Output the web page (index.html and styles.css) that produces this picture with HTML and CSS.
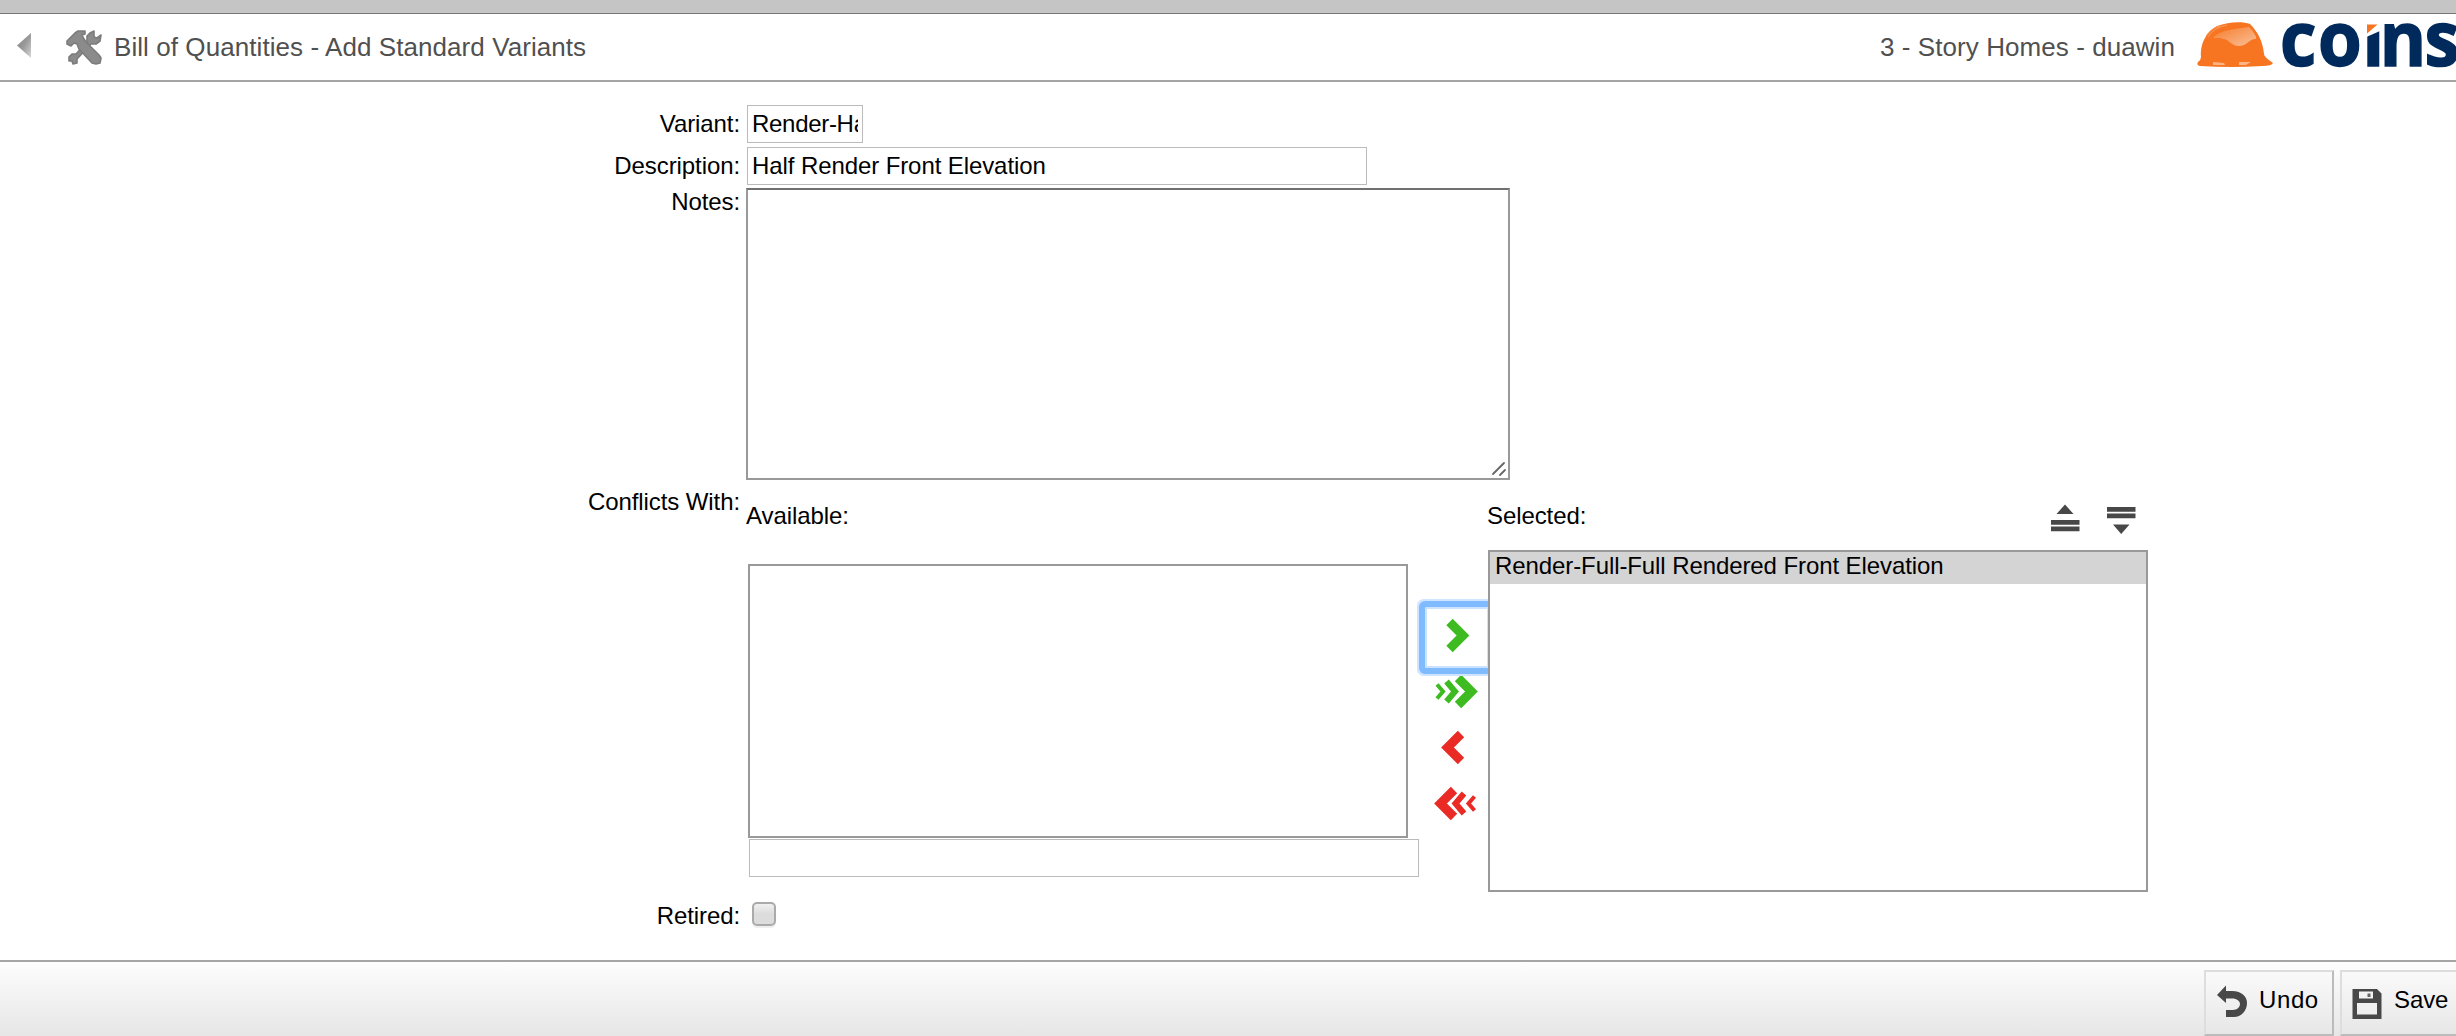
FILE: index.html
```html
<!DOCTYPE html>
<html lang="en">
<head>
<meta charset="utf-8">
<title>Bill of Quantities - Add Standard Variants</title>
<link rel="stylesheet" href="styles.css">
</head>
<body>
<div class="strip"></div>
<header class="header">
  <svg class="back" width="14" height="25" viewBox="0 0 14 25"><defs><linearGradient id="bg" x1="0" y1="0" x2="1" y2="1"><stop offset="0" stop-color="#858585"/><stop offset=".5" stop-color="#999"/><stop offset="1" stop-color="#d8d8d8"/></linearGradient></defs><path d="M14 0V25L0 12.5Z" fill="url(#bg)"/></svg>
  <svg class="tools" width="36" height="35" viewBox="0 0 36 35"><g fill="#8b8b8b" stroke="#7c7c7c" stroke-width="1.6" stroke-linejoin="round"><path d="M24 3L28 1V7L31 8L35 5L34 11L30 14L25 14L11 29V33L7 34L6 31L3 31V27L6 24L10 24L21 12V6Z"/><path d="M1 11L9 3L12 1H19V4L16 5L18 9L20 12L33 25L35 28L34 33L30 34L26 33L13 19L11 14L8 13L5 16L1 14Z"/></g></svg>
  <h1 class="title">Bill of Quantities - Add Standard Variants</h1>
  <span class="user">3 - Story Homes - duawin</span>
  <svg class="logo" width="260" height="66" viewBox="2196 14 260 66">
    <defs>
      <linearGradient id="hat" x1="0" y1="0" x2="1" y2="1"><stop offset="0" stop-color="#f57c2b"/><stop offset="1" stop-color="#fbc099"/></linearGradient>
      <clipPath id="cut"><rect x="2270" y="22" width="186" height="50"/></clipPath>
    </defs>
    <path d="M2201 57C2200 40 2209 31 2217 26C2228 22 2242 21 2250 24C2258 32 2263 42 2264 54Q2264 57 2273 63Q2272 66 2262 66Q2232 68 2200 66Q2196 65 2198 62Q2201 60 2201 57Z" fill="#f77420"/>
    <path d="M2213 38C2219 30 2235 29 2249 27C2255 33 2257 38 2256 39C2250 38 2246 47 2238 46C2230 45 2229 39 2223 39C2219 37 2216 39 2213 38Z" fill="url(#hat)"/>
    <path d="M2208 37Q2213 28 2227 25M2206 36Q2211 28 2220 26" fill="none" stroke="#f99c5f" stroke-width="1"/>
    <path d="M2213 62L2224 63L2225 65H2213ZM2239 62H2251L2246 65H2239Z" fill="#fcb385"/>
    <g clip-path="url(#cut)"><text class="wordmark" y="65.5" transform="translate(2278 0) scale(.93 1)" x="2.200 43 91 109.500 157.500">coins</text></g>
    <path d="M2364 20H2380V31L2364 38Z" fill="#fff"/>
    <path d="M2367 24.500H2377.500L2367 33.500Z" fill="#f77420"/>
  </svg>
</header>
<main class="form">
  <div class="row row-variant"><label class="label">Variant:</label><div class="text short">Render-Half</div></div>
  <div class="row row-desc"><label class="label">Description:</label><div class="text long">Half Render Front Elevation</div></div>
  <div class="row row-notes"><label class="label">Notes:</label>
    <div class="notes"><svg width="16" height="16" viewBox="0 0 16 16"><path d="M2 13L13 2M9 14L14 9" stroke="#666" stroke-width="1.8" stroke-linecap="round"/></svg></div>
  </div>
  <div class="row row-conflicts"><label class="label">Conflicts With:</label>
    <div class="available"><span class="caption">Available:</span><div class="list list-available"></div><div class="text filter"></div></div>
    <div class="moves">
      <div class="move focused"><svg width="46" height="48" viewBox="0 0 46 48"><path d="M16.500 10L30 23.500L16.500 37" class="g w7"/></svg></div>
      <div class="move"><svg width="46" height="48" viewBox="0 0 46 48"><path d="M25 10L38.500 23.500L25 37" class="g w7"/><path d="M13.500 13.500L22 23.500L13.500 33.500" class="g w5"/><path d="M4 16.500L10 23.500L4 30.500" class="g w3"/></svg></div>
      <div class="move"><svg width="46" height="48" viewBox="0 0 46 48"><path d="M28 10L14.500 23.500L28 37" class="r w7"/></svg></div>
      <div class="move"><svg width="46" height="48" viewBox="0 0 46 48"><path d="M21 10L7.500 23.500L21 37" class="r w7"/><path d="M31 13.500L22.500 23.500L31 33.500" class="r w5"/><path d="M41.500 16.500L35.500 23.500L41.500 30.500" class="r w3"/></svg></div>
    </div>
    <div class="selected">
      <div class="selected-head"><span>Selected:</span>
        <svg width="90" height="34" viewBox="2048 502 90 34" fill="#484848"><path d="M2056.500 514L2065 504.500L2073.500 514ZM2051 520H2079.500V524.700H2051ZM2051 526.500H2079.500V531.200H2051ZM2107 507H2135.500V511.700H2107ZM2107 513.500H2135.500V518.200H2107ZM2113 524.500H2129.500L2121.200 534Z"/></svg>
      </div>
      <div class="list list-selected"><div class="option">Render-Full-Full Rendered Front Elevation</div></div>
    </div>
  </div>
  <div class="row row-retired"><label class="label">Retired:</label><span class="check"></span></div>
</main>
<footer class="footer">
  <div class="button undo"><svg width="32" height="36" viewBox="2216 984 32 36"><path d="M2217 995L2226 985.500V991H2232C2242 991 2247 997 2247 1003C2247 1011 2241 1017 2234 1017H2226V1010H2233C2237 1010 2240 1007 2240 1004C2240 1001 2237 998.500 2232 998.500H2226V1003Z" fill="#484848"/></svg><span>Undo</span></div>
  <div class="button save"><svg width="30" height="32" viewBox="2352 988 30 32"><path fill-rule="evenodd" d="M2352.500 989H2377L2381.500 993.500V1019H2352.500ZM2359 991.500V998.500H2373V991.500ZM2357 1003V1014.500H2377V1003Z" fill="#484848"/><rect x="2367.500" y="993.500" width="3" height="3.500" fill="#666"/></svg><span>Save</span></div>
</footer>
</body>
</html>
```
FILE: styles.css
```css
* { box-sizing: border-box; }
body {
  margin: 0;
  width: 2456px;
  height: 1036px;
  overflow: hidden;
  display: flex;
  flex-direction: column;
  background: #fff;
  color: #000;
  font: 24px/28px "Liberation Sans", Arial, sans-serif;
  letter-spacing: -.09px;
}
svg { display: block; flex: none; }
.strip { height: 14px; flex: none; background: #c5c5c5; border-bottom: 1px solid #777; }
.header {
  height: 68px;
  flex: none;
  display: flex;
  align-items: center;
  padding-left: 17px;
  border-bottom: 2px solid #a5a5a5;
  color: #505050;
  font-size: 26px;
  line-height: 30px;
  letter-spacing: .07px;
}
.back { margin-top: -3px; }
.tools { margin-left: 35px; }
.title { margin: 0 auto 0 12px; font-size: 26px; font-weight: 400; line-height: 30px; }
.user { margin-right: 21px; }
.wordmark { font: 700 76px "Open Sans", sans-serif; letter-spacing: 0; fill: #002a5c; stroke: #002a5c; stroke-width: 1.6px; }

.form { height: 878px; flex: none; padding-top: 23px; }
.row { display: flex; align-items: flex-start; }
.label { width: 742px; flex: none; padding-right: 2px; text-align: right; }
.row-variant, .row-desc { height: 42px; }
.row-variant .label, .row-desc .label { padding-top: 5px; }
.text { height: 38px; margin-left: 5px; padding: 4px; border: 1px solid #bbb; white-space: nowrap; background: #fff; }
.short { width: 116px; overflow: clip; overflow-clip-margin: content-box; letter-spacing: -.3px; }
.long { width: 620px; }
.row-notes { height: 300px; margin-top: -1px; }
.notes {
  width: 764px;
  height: 292px;
  margin-left: 4px;
  border: 2px solid #999;
  border-top-color: #707070;
  display: flex;
  align-items: flex-end;
  justify-content: flex-end;
  padding: 1px;
}
.row-conflicts { height: 414px; }
.available { width: 673px; margin-left: 4px; padding-top: 14px; }
.caption { display: block; height: 62px; }
.list { width: 660px; border: 2px solid #999; background: #fff; }
.list-available { height: 274px; margin: 0 0 1px 2px; }
.filter { width: 670px; margin-left: 3px; }
.moves { width: 68px; padding-top: 120px; }
.move { width: 68px; height: 56px; padding: 4px 0 0 14px; }
.focused { position: relative; }
.focused::before {
  content: "";
  position: absolute;
  left: 6px;
  top: -1px;
  width: 60px;
  height: 57px;
  border: 2px solid #cce3ff;
  box-shadow: 0 0 0 6px #80bbff, 0 0 0 8px #cfe5ff;
  border-radius: 2px;
}
.g, .r { fill: none; }
.g { stroke: #3dbb20; }
.r { stroke: #e92a25; }
.w7 { stroke-width: 9; }
.w5 { stroke-width: 6; }
.w3 { stroke-width: 4; }
.selected { position: relative; width: 661px; padding-top: 14px; }
.selected-head { display: flex; justify-content: space-between; height: 48px; padding-right: 10px; }
.list-selected { height: 342px; margin-left: 1px; }
.option { height: 32px; padding: 0 5px; background: #d4d4d4; white-space: nowrap; }
.check {
  width: 24px;
  height: 24px;
  margin-left: 10px;
  border: 2px solid #aaa;
  border-radius: 5px;
  background: linear-gradient(#f0f0f0, #dcdcdc 50%);
  box-shadow: 0 2px 1px #eee;
}
.footer {
  height: 76px;
  flex: none;
  display: flex;
  justify-content: flex-end;
  gap: 6px;
  padding-top: 8px;
  border-top: 2px solid #a5a5a5;
  background: linear-gradient(#fdfdfd, #e6e6e6);
}
.button { height: 66px; flex: none; display: flex; border: 2px solid #ddd; border-right-color: #bbb; border-bottom-color: #bbb; }
.button span { margin-top: 14px; }
.undo { width: 130px; padding-left: 10px; letter-spacing: .6px; }
.undo svg { margin: 12px 11px 0 0; }
.save { width: 116px; padding-left: 10px; border-right: 0; }
.save svg { margin: 16px 12px 0 0; }
```
